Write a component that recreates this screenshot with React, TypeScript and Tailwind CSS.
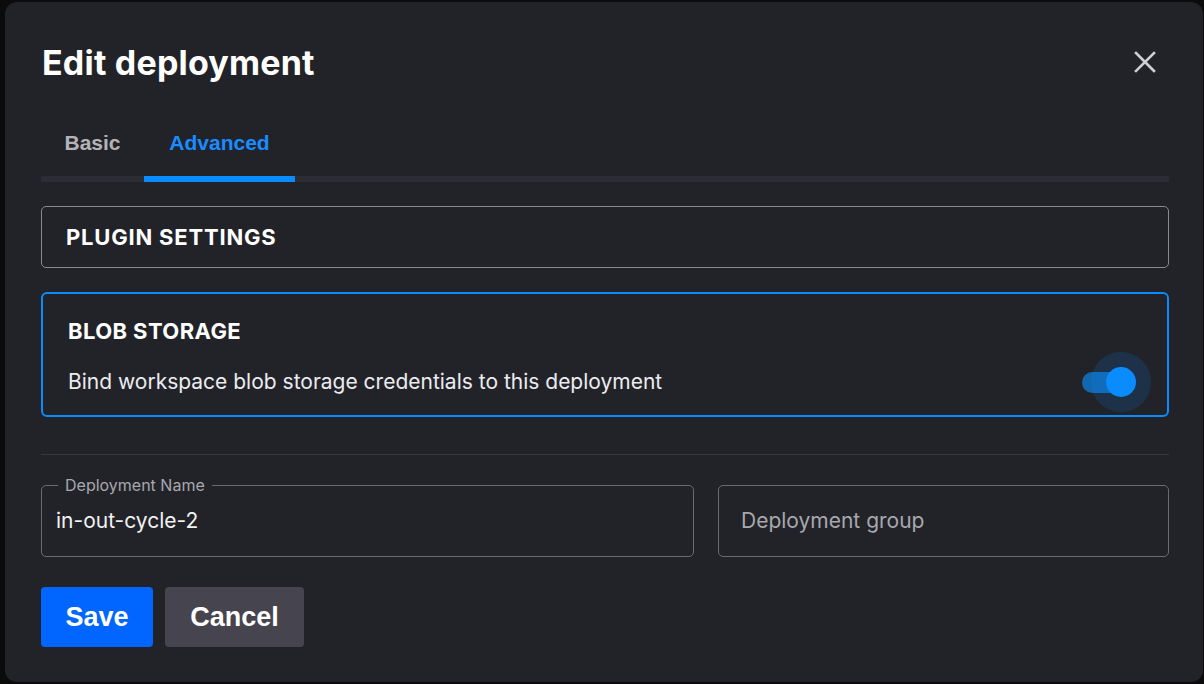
import React from "react";

export default function App() {
  const inter = { fontFamily: "Inter, 'Noto Sans', sans-serif" };
  const arial = { fontFamily: "'Liberation Sans', Arial, sans-serif" };
  return (
    <div className="w-[1204px] h-[684px] bg-[#0b0b0c] pt-[2px] pl-[5px] overflow-hidden" style={inter}>
      <div className="w-[1198px] h-[680px] bg-[#222328] rounded-[12px] pl-[36px] pr-[34px] flex flex-col">
        <div className="flex items-center justify-between h-[62px] mt-[30px] pl-[1px]">
          <h1 className="text-[34px] font-bold text-white leading-none tracking-[0.2px]">Edit deployment</h1>
          <button className="text-[#cfcfd3] mr-[12px] mt-[-2px]">
            <svg width="24" height="24" viewBox="0 0 24 24" fill="none" stroke="currentColor" strokeWidth="2.6" strokeLinecap="square">
              <path d="M3 3L21 21M21 3L3 21" />
            </svg>
          </button>
        </div>
        <div className="mt-[16px] flex flex-col">
          <div className="flex h-[66px]" style={arial}>
            <div className="w-[103px] flex items-center justify-center text-[21px] font-bold text-[#b4b4b8]">Basic</div>
            <div className="w-[151px] flex items-center justify-center text-[21px] font-bold text-[#1a8cff]">Advanced</div>
          </div>
          <div className="h-[6px] bg-[#2c2c34] flex">
            <div className="w-[103px]" />
            <div className="w-[151px] bg-[#0a8cff]" />
          </div>
        </div>
        <div className="mt-[24px] h-[62px] border border-[#8a8a8e] rounded-[5px] flex items-center pl-[24px]">
          <span className="text-[22px] font-bold text-white tracking-[0.8px]">PLUGIN SETTINGS</span>
        </div>
        <div className="mt-[24px] h-[125px] border-2 border-[#0a8cff] rounded-[6px] pl-[25px] pr-[18px] flex flex-col">
          <div className="mt-[23px] text-[22px] font-bold text-white leading-[28px] tracking-[0.4px]">BLOB STORAGE</div>
          <div className="flex items-center justify-between mt-[23px]">
            <span className="text-[21px] text-[#ececf0] leading-[28px]">Bind workspace blob storage credentials to this deployment</span>
            <div className="relative w-[48px] h-[21px] mr-[19px]">
              <div className="absolute inset-0 rounded-full bg-[#1367b0]" />
              <div className="absolute w-[60px] h-[60px] rounded-full bg-[#0a8cff]/15 left-[9px] top-[-20px]" />
              <div className="absolute w-[30px] h-[30px] rounded-full bg-[#0a8cff] left-[24px] top-[-5px]" />
            </div>
          </div>
        </div>
        <div className="mt-[37px] h-px bg-[#37373d]" />
        <div className="mt-[30px] flex gap-[24px]">
          <div className="relative w-[653px] h-[72px] border border-[#6a6a70] rounded-[5px] flex items-center pl-[14px]">
            <span className="absolute left-[16px] top-[-11px] bg-[#222328] px-[7px] text-[16px] text-[#a8a8ae] leading-[20px]">Deployment Name</span>
            <span className="text-[21px] text-[#f2f2f4]">in-out-cycle-2</span>
          </div>
          <div className="w-[451px] h-[72px] border border-[#6a6a70] rounded-[5px] flex items-center pl-[22px]">
            <span className="text-[21px] text-[#a8a8ae]">Deployment group</span>
          </div>
        </div>
        <div className="mt-[30px] flex gap-[12px]" style={arial}>
          <button className="w-[112px] h-[60px] rounded-[4px] bg-[#0066ff] text-white text-[27px] font-bold">Save</button>
          <button className="w-[139px] h-[60px] rounded-[4px] bg-[#45444f] text-white text-[27px] font-bold">Cancel</button>
        </div>
      </div>
    </div>
  );
}
